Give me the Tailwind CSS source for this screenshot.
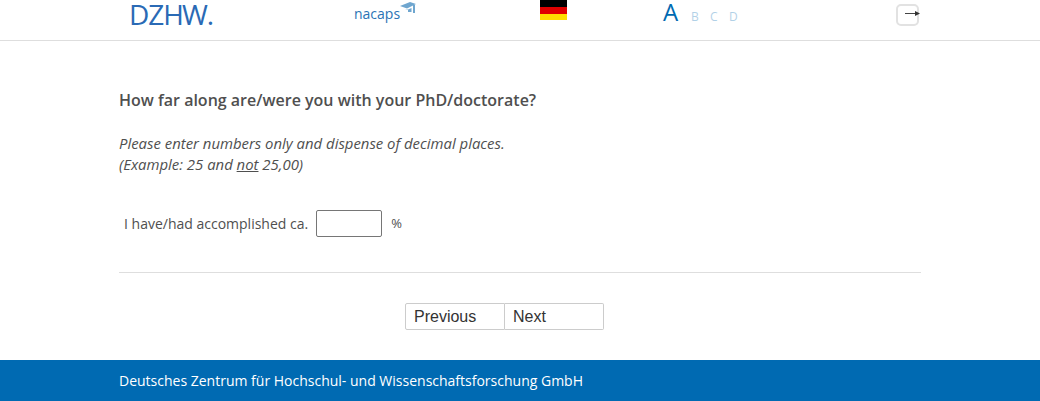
<!DOCTYPE html>
<html lang="en">
  <head>
    <meta charset="UTF-8" />
    <meta name="viewport" content="width=device-width, initial-scale=1.0" />
    <script src="https://cdn.jsdelivr.net/npm/@tailwindcss/browser@4"></script>
    <title>nacaps</title>
  </head>
  <body class="bg-white font-['Open_Sans',sans-serif] text-[#4f4f4f]">
    <header class="h-[41px] border-b border-[#dedede]">
      <div class="flex items-start h-[40px] pl-[129px]">
        <div class="w-[225px] -mt-[1px] text-[28px] leading-[30px] tracking-[-1px] text-[#2a6ab5] font-normal">DZH<span class="-ml-[1px]">W</span>.</div>
        <div class="w-[186px] flex items-start pt-[5px]">
          <span class="text-[14px] leading-[18px] text-[#2b74b5]">nacaps</span>
          <svg class="-mt-[4px] -ml-[1px]" width="17" height="15" viewBox="0 0 17 15">
            <path d="M1 5 L11 1 L17 3 L8 7.5 Z" fill="#6fa6cf" />
            <path d="M6 8 L8 9 L12.5 7 L12.5 11 L9 11 L9 9 Z" fill="#6fa6cf" />
            <rect x="14" y="4" width="2" height="8" fill="#6fa6cf" />
          </svg>
        </div>
        <div class="w-[123px] shrink-0">
          <div class="w-[27px] h-[20px] flex flex-col">
            <div class="h-[7px] bg-black"></div>
            <div class="h-[7px] bg-[#e00000]"></div>
            <div class="h-[6px] bg-[#ffdd00]"></div>
          </div>
        </div>
        <div class="w-[234px] flex items-baseline -mt-[2px] text-[#006ab2]">
          <span class="text-[24px] leading-[28px] w-[28px]">A</span>
          <span class="text-[12px] w-[19px] opacity-30">B</span>
          <span class="text-[12px] w-[19px] opacity-30">C</span>
          <span class="text-[12px] opacity-30">D</span>
        </div>
        <div class="relative w-[23px] h-[22px] mt-[4px] -ml-[1px] border-2 border-[#e2e2e2] rounded-[5px]">
          <svg class="absolute left-[7px] top-[3px]" width="16" height="10" viewBox="0 0 16 10">
            <rect x="0" y="4" width="12" height="1" fill="#444" />
            <path d="M10 2 L15 4.5 L10 7 Z" fill="#333" />
          </svg>
        </div>
      </div>
    </header>

    <main class="w-[802px] ml-[119px] h-[319px]">
      <h1 class="pt-[48px] text-[16px] leading-[22px] font-semibold">How far along are/were you with your PhD/doctorate?</h1>
      <p class="mt-[22px] text-[14.9px] leading-[21px] italic">
        Please enter numbers only and dispense of decimal places.<br />
        (Example: 25 and <span class="underline">not</span> 25,00)
      </p>
      <div class="mt-[35px] flex items-center pl-[5px] text-[14px] h-[27px]">
        <label>I have/had accomplished ca.</label>
        <input type="text" class="ml-[8px] w-[66px] h-[27px] border border-[#767676] rounded-[2px] bg-white" />
        <span class="ml-[9px] text-[13px]">%</span>
      </div>
      <hr class="mt-[35px] border-[#dedede]" />
      <div class="mt-[30px] ml-[286px] flex font-['Liberation_Sans',sans-serif] text-[16px] text-[#333]">
        <button class="w-[100px] h-[27px] border border-[#cccccc] rounded-l-[2px] text-left pl-[8px]">Previous</button>
        <button class="w-[99px] h-[27px] border border-l-0 border-[#cccccc] rounded-r-[2px] text-left pl-[8px]">Next</button>
      </div>
    </main>

    <footer class="h-[41px] bg-[#006ab2] pl-[119px] flex items-center text-[14px] text-white">
      Deutsches Zentrum für Hochschul- und Wissenschaftsforschung GmbH
    </footer>
  </body>
</html>
